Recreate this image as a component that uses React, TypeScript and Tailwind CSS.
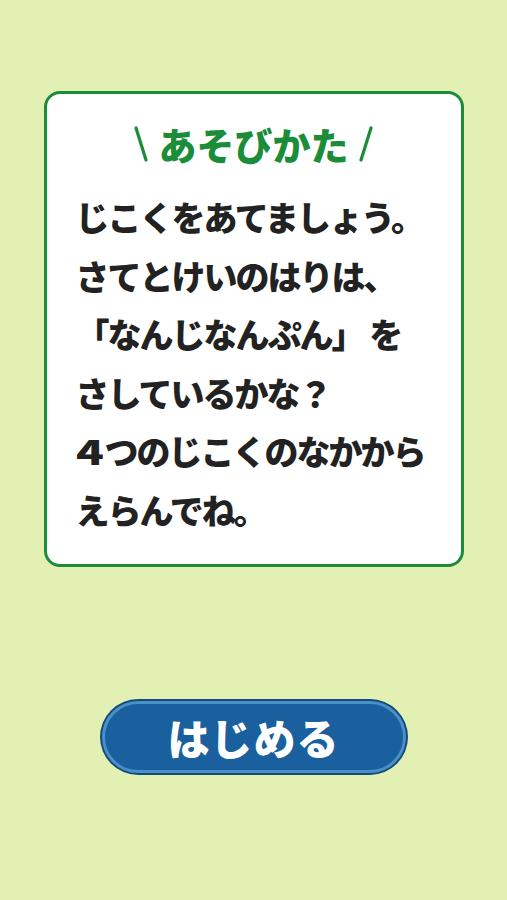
import React from "react";

const font = { fontFamily: '"Noto Sans CJK JP", "Noto Sans", sans-serif' };

function Slash({ flip }: { flip?: boolean }) {
  return (
    <svg width="14" height="40" viewBox="0 0 14 40" className="shrink-0">
      {flip ? (
        <line x1="12" y1="4" x2="2" y2="36" stroke="#1b8c38" strokeWidth="3.2" strokeLinecap="round" />
      ) : (
        <line x1="2" y1="4" x2="12" y2="36" stroke="#1b8c38" strokeWidth="3.2" strokeLinecap="round" />
      )}
    </svg>
  );
}

export default function App() {
  const lines: React.ReactNode[] = [
    "じこくをあてましょう。",
    "さてとけいのはりは、",
    "「なんじなんぷん」 を",
    "さしているかな？",
    <>
      <span className="inline-block w-[29px] origin-left scale-x-[1.35]">4</span>つのじこくのなかから
    </>,
    "えらんでね。",
  ];
  return (
    <div className="w-[507px] h-[900px] bg-[#e2f1b3] flex flex-col items-center" style={font}>
      <div className="mt-[91px] w-[420px] h-[476px] bg-white border-[3px] border-[#1b8c38] rounded-[16px] flex flex-col">
        <div className="mt-[30px] flex items-center justify-center gap-[10px] text-[#1b8c38] font-black">
          <Slash />
          <span className="text-[38px] leading-none tracking-[0px]">あそびかた</span>
          <Slash flip />
        </div>
        <div className="mt-[24px] pl-[29px] text-[#222222] font-black text-[34px] leading-[58.5px] tracking-[-2px]">
          {lines.map((l, i) => (
            <div key={i} className="whitespace-nowrap">{l}</div>
          ))}
        </div>
      </div>
      <div className="mt-[132px] w-[308px] h-[76px] rounded-full bg-[#124a7a] p-[2px]">
        <div className="w-full h-full rounded-full bg-[#1a5f9e] border-[3px] border-[#4a8fc8] flex items-center justify-center">
          <span className="text-white font-black text-[42px] leading-none tracking-[1px]">はじめる</span>
        </div>
      </div>
    </div>
  );
}
